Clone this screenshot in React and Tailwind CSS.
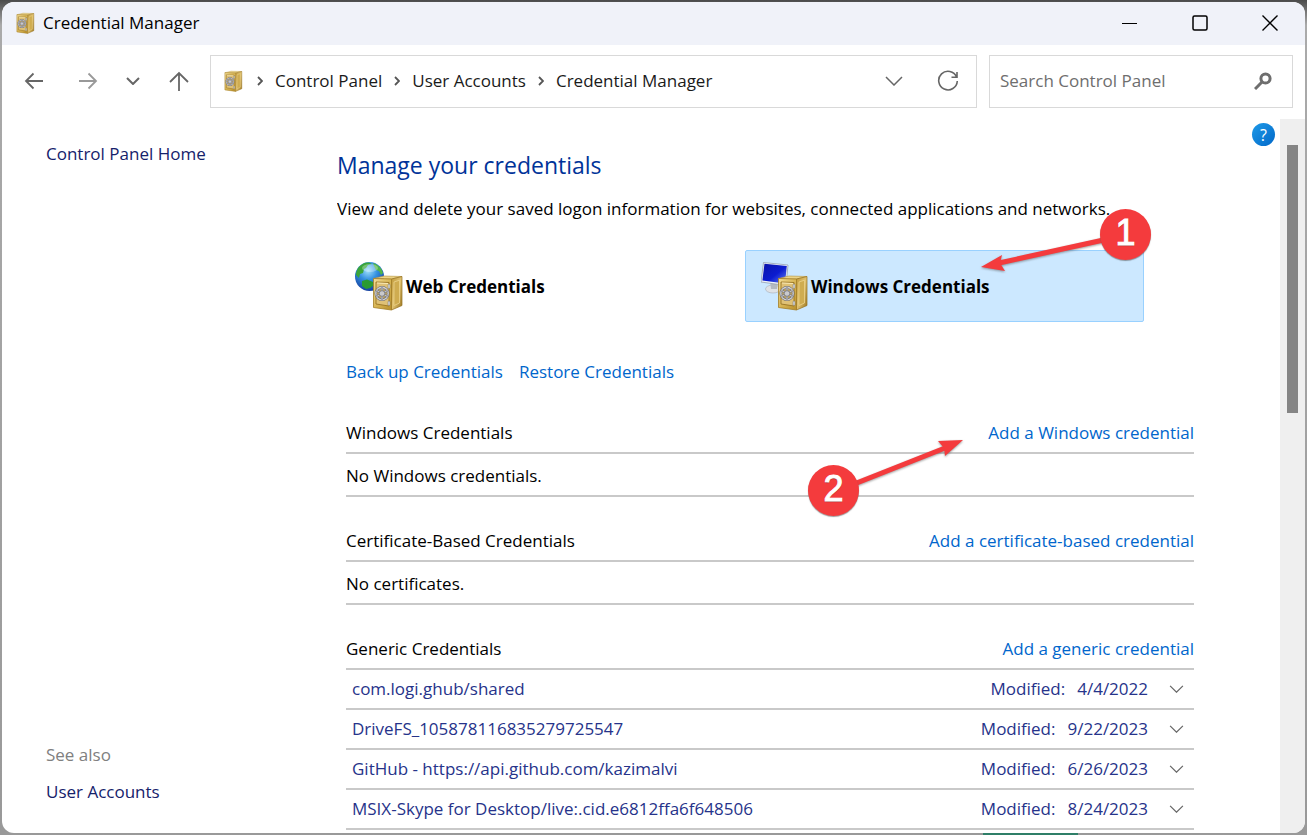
import { useId } from 'react'

const CRUMBS = ['Control Panel', 'User Accounts', 'Credential Manager']

const GENERIC = [
  { name: 'com.logi.ghub/shared', date: '4/4/2022' },
  { name: 'DriveFS_105878116835279725547', date: '9/22/2023' },
  { name: 'GitHub - https://api.github.com/kazimalvi', date: '6/26/2023' },
  { name: 'MSIX-Skype for Desktop/live:.cid.e6812ffa6f648506', date: '8/24/2023' },
]

// Safe body drawn in a 30x36 box, shared by every icon on the page
function SafeShape() {
  const id = useId()
  return (
    <g>
      <defs>
        <linearGradient id={`${id}f`} x1="0" y1="0" x2="1" y2="1">
          <stop offset="0" stopColor="#f3dd97" />
          <stop offset="0.5" stopColor="#d8b656" />
          <stop offset="1" stopColor="#b88f2b" />
        </linearGradient>
        <linearGradient id={`${id}s`} x1="0" y1="0" x2="1" y2="1">
          <stop offset="0" stopColor="#c09a3a" />
          <stop offset="0.5" stopColor="#e0c272" />
          <stop offset="1" stopColor="#9a741c" />
        </linearGradient>
      </defs>
      <path d="M0.5 4.5 L11 2 L29 2.5 L18.5 5 Z" fill="#ecd487" stroke="#b6923c" strokeWidth="0.6" />
      <path d="M18.5 5 L29 2.5 V31.5 L18.5 36 Z" fill={`url(#${id}s)`} stroke="#94701f" strokeWidth="0.7" />
      <path d="M21 8 L26.5 6.2 V29 L21 31.5 Z" fill="#cfac50" stroke="#ecd38a" strokeWidth="0.8" />
      <path d="M0.5 4.5 L18.5 5 V36 L0.5 33.5 Z" fill={`url(#${id}f)`} stroke="#a37d25" strokeWidth="0.8" />
      <path d="M3 8 L16 8.5 V32 L3 30 Z" fill="#dfc176" stroke="#987424" strokeWidth="0.9" />
      <path d="M4 9 L15 9.5" stroke="#f8e9b6" strokeWidth="1" />
      <rect x="15" y="10" width="2" height="4.5" rx="1" fill="#dadada" stroke="#777" strokeWidth="0.5" />
      <rect x="15" y="27" width="2" height="4.5" rx="1" fill="#dadada" stroke="#777" strokeWidth="0.5" />
      <circle cx="9" cy="19.5" r="6.2" fill="#bda466" stroke="#68686c" strokeWidth="2.6" />
      <circle cx="9" cy="19.5" r="6.2" fill="none" stroke="#cdcdd1" strokeWidth="1.4" />
      <path d="M9 13 V26 M3.4 16.3 L14.6 22.7 M3.4 22.7 L14.6 16.3" stroke="#7e7e84" strokeWidth="2" />
      <path d="M9 13 V26 M3.4 16.3 L14.6 22.7 M3.4 22.7 L14.6 16.3" stroke="#c4c4c8" strokeWidth="1" />
      <circle cx="9" cy="19.5" r="2.8" fill="#c9c9cd" stroke="#77777c" strokeWidth="0.8" />
    </g>
  )
}

function SafeIcon() {
  return (
    <svg viewBox="0 0 30 37" className="h-[22px] w-[19px] shrink-0" aria-hidden="true">
      <SafeShape />
    </svg>
  )
}

function WebIcon() {
  return (
    <svg viewBox="0 0 48 49" className="h-[49px] w-12 shrink-0" aria-hidden="true">
      <defs>
        <radialGradient id="globe" cx="0.45" cy="0.3" r="0.7">
          <stop offset="0" stopColor="#9fe0fa" />
          <stop offset="0.45" stopColor="#3390e0" />
          <stop offset="1" stopColor="#15409f" />
        </radialGradient>
      </defs>
      <circle cx="14.5" cy="14.5" r="14.5" fill="url(#globe)" />
      <path d="M3 6 C6 2 10 0 14 0.5 L17 2 L13 3 L11 6 L9 7 L8 11 L5 12 L4 16 L1 13 C1 10 2 8 3 6 Z" fill="#3aa53a" />
      <path d="M18 1 C24 3 27 7 28 11 L26 13 L24 9 L21 8 L19 4 Z" fill="#4fb548" />
      <path d="M7 19 L12 17.5 L18 20 L19 23 L15 26 L11 27 L7 24 Z" fill="#2a9a31" />
      <ellipse cx="15" cy="6" rx="8" ry="4" fill="#fff" opacity="0.3" />
      <g transform="translate(18 12)">
        <SafeShape />
      </g>
    </svg>
  )
}

function MonitorIcon() {
  return (
    <svg viewBox="0 0 48 49" className="h-[49px] w-12 shrink-0" aria-hidden="true">
      <defs>
        <linearGradient id="screen" x1="0" y1="0" x2="1" y2="1">
          <stop offset="0" stopColor="#0a12a8" />
          <stop offset="0.55" stopColor="#0c1cd0" />
          <stop offset="1" stopColor="#6a86f4" />
        </linearGradient>
      </defs>
      <ellipse cx="12" cy="27" rx="7.5" ry="4" fill="#dfe2e6" stroke="#a8adb5" strokeWidth="0.6" />
      <path d="M9 19 H17 L16 27 H10 Z" fill="#b4b9c1" />
      <path d="M2.5 0.5 L27 3 L25 23.5 L0 20 Z" fill="#f0f3f8" stroke="#8b95a8" strokeWidth="0.7" />
      <path d="M3.5 1.7 L25.8 4 L24 21.5 L1.4 18.4 Z" fill="url(#screen)" />
      <g transform="translate(17 12)">
        <SafeShape />
      </g>
    </svg>
  )
}

function Chevron({ className }) {
  return (
    <svg viewBox="0 0 18 10" className={className} fill="none" stroke="currentColor" strokeWidth="1.5" aria-hidden="true">
      <path d="M1 1 L9 9 L17 1" />
    </svg>
  )
}

function Badge({ number, className }) {
  return (
    <span
      className={`absolute flex size-[51px] items-center justify-center rounded-full bg-[#f43b3d] pb-1 font-['Liberation_Sans',sans-serif] text-4xl font-normal text-white shadow-[0_1px_1px_rgba(90,90,90,0.6)] [-webkit-text-stroke:1px_white] [text-shadow:0_1px_1px_rgba(0,0,0,0.45)] ${className}`}
    >
      {number}
    </span>
  )
}

function Section({ title, action, children, callout }) {
  return (
    <section className="relative mb-[25px]">
      <div className="flex h-10 items-center justify-between border-b-2 border-[#c9c9c9] text-black">
        <h2>{title}</h2>
        <a href="#add" className="text-[#0066cc]">{action}</a>
      </div>
      {children}
      {callout}
    </section>
  )
}

export default function App() {
  return (
    <div className="relative h-screen overflow-hidden bg-linear-to-b from-[#4b4b4b] from-0% via-[#aaaaaa] via-3% to-[#999999] p-0.5 font-['Open_Sans','Noto_Sans',sans-serif] text-[17px] leading-6">
      {/* Desktop showing past the window's bottom edge */}
      <div className="absolute bottom-0 right-[229px] h-0.5 w-[95px] bg-[#2f7f68]" />

      <div className="flex h-full flex-col overflow-hidden rounded-xl bg-white">
        {/* Title bar */}
        <header className="flex h-[43px] shrink-0 items-center bg-[#f0f2f9] pb-0.5 pl-3.5 text-black">
          <SafeIcon />
          <span className="ml-2">Credential Manager</span>
          <div className="ml-auto flex h-full">
            <button type="button" aria-label="Minimize" className="flex w-[70px] items-center justify-center">
              <svg viewBox="0 0 16 16" className="size-4" stroke="currentColor" aria-hidden="true">
                <path d="M0 8.5 H15" />
              </svg>
            </button>
            <button type="button" aria-label="Maximize" className="flex w-[70px] items-center justify-center">
              <svg viewBox="0 0 16 16" className="size-4" fill="none" stroke="currentColor" strokeWidth="1.5" aria-hidden="true">
                <rect x="1" y="1" width="14" height="14" rx="1.5" />
              </svg>
            </button>
            <button type="button" aria-label="Close" className="flex w-[70px] items-center justify-center">
              <svg viewBox="0 0 16 16" className="size-4" fill="none" stroke="currentColor" strokeWidth="1.4" aria-hidden="true">
                <path d="M0.5 0.5 L15.5 15.5 M15.5 0.5 L0.5 15.5" />
              </svg>
            </button>
          </div>
        </header>

        {/* Navigation */}
        <div className="flex h-[74px] shrink-0 items-center pb-0.5 pr-3">
          <nav className="flex w-52 shrink-0 items-center text-[#666666]" aria-label="History">
            <button type="button" aria-label="Back" className="ml-[22px]">
              <svg viewBox="0 0 20 20" className="size-5" fill="none" stroke="currentColor" strokeWidth="1.8" aria-hidden="true">
                <path d="M19 10 H2 M9.5 2.5 L2 10 L9.5 17.5" />
              </svg>
            </button>
            <button type="button" aria-label="Forward" className="ml-[34px] text-[#999999]">
              <svg viewBox="0 0 20 20" className="size-5" fill="none" stroke="currentColor" strokeWidth="1.8" aria-hidden="true">
                <path d="M1 10 H18 M10.5 2.5 L18 10 L10.5 17.5" />
              </svg>
            </button>
            <button type="button" aria-label="Recent locations" className="ml-7">
              <svg viewBox="0 0 14 8" className="h-2 w-3.5" fill="none" stroke="currentColor" strokeWidth="2" aria-hidden="true">
                <path d="M1 1 L7 7 L13 1" />
              </svg>
            </button>
            <button type="button" aria-label="Up" className="ml-[29px]">
              <svg viewBox="0 0 20 20" className="size-5" fill="none" stroke="currentColor" strokeWidth="1.8" aria-hidden="true">
                <path d="M10 20 V2 M1 11 L10 2 L19 11" />
              </svg>
            </button>
          </nav>
          <div className="flex h-[53px] flex-1 items-center border border-[#d9d9d9] pl-[13px] pr-[17px] text-[#1a1a1a]">
            <SafeIcon />
            {CRUMBS.map((crumb) => (
              <span key={crumb} className="flex items-center first-of-type:ml-0.5">
                <svg viewBox="0 0 6 10" className="mx-3 h-2.5 w-1.5" fill="none" stroke="#555555" strokeWidth="1.8" aria-hidden="true">
                  <path d="M1 1 L5 5 L1 9" />
                </svg>
                <a href="#crumb">{crumb}</a>
              </span>
            ))}
            <button type="button" aria-label="Previous locations" className="ml-auto text-[#666666]">
              <Chevron className="h-2.5 w-[18px]" />
            </button>
            <button type="button" aria-label="Refresh" className="ml-[34px] text-[#666666]">
              <svg viewBox="0 0 22 22" className="size-[22px]" fill="none" stroke="currentColor" strokeWidth="1.6" aria-hidden="true">
                <path d="M19.6 7 A9.3 9.3 0 1 0 20.3 11 M20 2 V7.2 H14.5" />
              </svg>
            </button>
          </div>
          <label className="ml-3 flex h-[53px] w-[304px] items-center border border-[#d9d9d9] pl-2.5 pr-5">
            <input
              type="text"
              aria-label="Search Control Panel"
              placeholder="Search Control Panel"
              className="min-w-0 flex-1 outline-none placeholder:text-[#6e6e6e]"
            />
            <svg viewBox="0 0 18 18" className="size-[18px]" fill="none" stroke="#6e6e6e" aria-hidden="true">
              <circle cx="11.5" cy="6.5" r="4.6" strokeWidth="3" />
              <path d="M8 10 L1 17" strokeWidth="3" />
            </svg>
          </label>
        </div>

        {/* Content */}
        <div className="flex min-h-0 flex-1">
          <aside className="flex w-[335px] shrink-0 flex-col pb-[29px] pl-11 pt-[23px] text-[#15226b]">
            <a href="#home">Control Panel Home</a>
            <div className="mt-auto flex flex-col gap-[13px]">
              <span className="text-[#808080]">See also</span>
              <a href="#accounts">User Accounts</a>
            </div>
          </aside>

          <main className="relative min-w-0 flex-1 overflow-hidden pr-[86px] pt-[30px]">
            <button
              type="button"
              aria-label="Help"
              className="absolute right-[5px] top-1 flex size-[23px] items-center justify-center rounded-full bg-linear-to-br from-[#1e9ae8] to-[#0468c8] text-base text-white"
            >
              ?
            </button>
            <h1 className="text-[23px] leading-8 text-[#003399]">Manage your credentials</h1>
            <p className="mt-4 whitespace-nowrap text-black">
              View and delete your saved logon information for websites, connected applications and networks.
            </p>

            <div className="ml-0.5 mr-[50px] mt-[29px] grid grid-cols-2 gap-[7px] font-bold text-black">
              <button type="button" className="flex h-[72px] items-center gap-[3px] pl-4 text-left">
                <WebIcon />
                <span className="pt-0.5">Web Credentials</span>
              </button>
              <div className="relative">
                <button
                  type="button"
                  className="flex h-[72px] w-full items-center gap-0.5 rounded-xs border border-[#99d1ff] bg-[#cce8ff] pl-[15px] text-left"
                >
                  <MonitorIcon />
                  <span className="pt-0.5">Windows Credentials</span>
                </button>
                <svg viewBox="0 0 150 50" className="absolute right-[14px] top-[-20px] h-[50px] w-[150px] drop-shadow-[0_1px_1px_rgba(90,90,90,0.6)]" aria-hidden="true">
                  <path d="M128 9 L19 33" stroke="#f43b3d" strokeWidth="5" />
                  <path d="M1 37 L22 25 L20 33 L25 41 Z" fill="#f43b3d" />
                </svg>
                <Badge number="1" className="right-[-7px] top-[-41px]" />
              </div>
            </div>

            <div className="ml-[9px] mt-[38px] flex gap-4 text-[#0066cc]">
              <a href="#backup">Back up Credentials</a>
              <a href="#restore">Restore Credentials</a>
            </div>

            <div className="ml-[9px] mt-[30px]">
              <Section
                title="Windows Credentials"
                action="Add a Windows credential"
                callout={
                  <>
                    <svg viewBox="0 0 120 50" className="absolute right-[230px] top-[22px] h-[50px] w-[120px] drop-shadow-[0_1px_1px_rgba(90,90,90,0.6)]" aria-hidden="true">
                      <path d="M10 48 L101 12" stroke="#f43b3d" strokeWidth="5" />
                      <path d="M119 4 L94 5 L100 12 L101 20 Z" fill="#f43b3d" />
                    </svg>
                    <Badge number="2" className="right-[335px] top-[51px]" />
                  </>
                }
              >
                <p className="flex h-[43px] items-center border-b-2 border-[#c9c9c9] pt-0.5 text-black">No Windows credentials.</p>
              </Section>
              <Section title="Certificate-Based Credentials" action="Add a certificate-based credential">
                <p className="flex h-[43px] items-center border-b-2 border-[#c9c9c9] pt-0.5 text-black">No certificates.</p>
              </Section>
              <Section title="Generic Credentials" action="Add a generic credential">
                <ul className="text-[#26338a]">
                  {GENERIC.map((item) => (
                    <li key={item.name} className="flex h-10 items-center border-b-2 border-[#c9c9c9] pl-1.5 pr-2.5">
                      <a href="#details">{item.name}</a>
                      <span className="ml-auto">Modified:</span>
                      <span className="ml-3">{item.date}</span>
                      <button type="button" aria-label={`Expand ${item.name}`} className="ml-[21px] text-[#666666]">
                        <Chevron className="h-2 w-[15px]" />
                      </button>
                    </li>
                  ))}
                </ul>
              </Section>
            </div>
          </main>

          <div className="w-[25px] shrink-0 bg-[#efefef] pl-[7px] pt-[26px]">
            <div className="h-[268px] w-[11px] bg-[#858585]" />
          </div>
        </div>
      </div>
    </div>
  )
}
